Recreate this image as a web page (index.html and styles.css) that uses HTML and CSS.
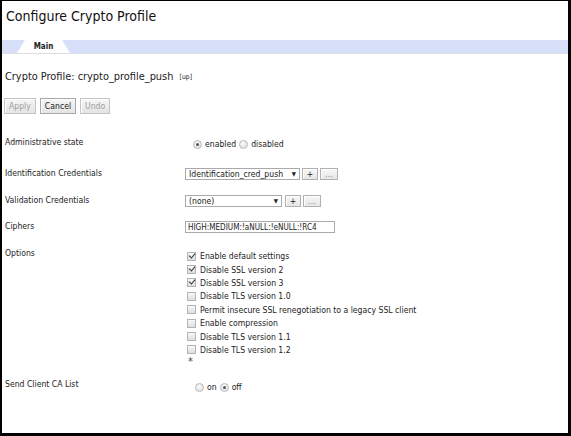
FILE: index.html
```html
<!DOCTYPE html>
<html>
<head>
<meta charset="utf-8">
<link rel="stylesheet" href="styles.css">
</head>
<body>
<div class="frame">
  <h1 class="title">Configure Crypto Profile</h1>
  <div class="tabbar">
    <div class="tab">Main</div>
  </div>
  <div class="profile">Crypto Profile: crypto_profile_push <span class="state">[up]</span></div>
  <div class="actions">
    <button class="btn disabled">Apply</button>
    <button class="btn">Cancel</button>
    <button class="btn disabled">Undo</button>
  </div>

  <div class="row row-admin">
    <div class="label">Administrative state</div>
    <div class="control radios">
      <span class="radio on"></span><span class="rtext">enabled</span>
      <span class="radio"></span><span class="rtext">disabled</span>
    </div>
  </div>

  <div class="row row-ident">
    <div class="label">Identification Credentials</div>
    <div class="control inline">
      <div class="select sel-ident"><span>Identification_cred_push</span><span class="arrow">▼</span></div>
      <span class="mini plus">+</span><span class="mini dim">...</span>
    </div>
  </div>

  <div class="row row-valid">
    <div class="label">Validation Credentials</div>
    <div class="control inline">
      <div class="select sel-valid"><span>(none)</span><span class="arrow">▼</span></div>
      <span class="mini plus">+</span><span class="mini dim">...</span>
    </div>
  </div>

  <div class="row row-ciphers">
    <div class="label">Ciphers</div>
    <div class="control">
      <div class="textbox">HIGH:MEDIUM:!aNULL:!eNULL:!RC4</div>
    </div>
  </div>

  <div class="row row-options">
    <div class="label">Options</div>
    <div class="control checks">
      <div class="check"><span class="box on"></span>Enable default settings</div>
      <div class="check"><span class="box on"></span>Disable SSL version 2</div>
      <div class="check"><span class="box on"></span>Disable SSL version 3</div>
      <div class="check"><span class="box"></span>Disable TLS version 1.0</div>
      <div class="check"><span class="box"></span>Permit insecure SSL renegotiation to a legacy SSL client</div>
      <div class="check"><span class="box"></span>Enable compression</div>
      <div class="check"><span class="box"></span>Disable TLS version 1.1</div>
      <div class="check"><span class="box"></span>Disable TLS version 1.2</div>
      <div class="star">*</div>
    </div>
  </div>

  <div class="row row-send">
    <div class="label">Send Client CA List</div>
    <div class="control radios radios-send">
      <span class="radio"></span><span class="rtext">on</span>
      <span class="radio on"></span><span class="rtext">off</span>
    </div>
  </div>
</div>
</body>
</html>
```
FILE: styles.css
```css
html, body {
  margin: 0;
  padding: 0;
  background: #fff;
}
.frame {
  width: 571px;
  height: 436px;
  box-sizing: border-box;
  border-style: solid;
  border-color: #000;
  border-width: 1px 3px 3px 2px;
  font-family: "DejaVu Sans Condensed", "DejaVu Sans", sans-serif;
  font-stretch: condensed;
  color: #222;
  overflow: hidden;
}
.title {
  margin: 0;
  padding: 6px 0 0 4px;
  height: 33px;
  box-sizing: border-box;
  font-size: 14px;
  font-weight: normal;
  line-height: 18px;
  color: #111;
}
.tabbar {
  height: 13px;
  background: #d8dff8;
  border-bottom: 1px solid #dcdce4;
  margin-top: 6px;
  padding-left: 15px;
  display: flex;
}
.tab {
  width: 53px;
  height: 13px;
  background: #fff;
  clip-path: polygon(15% 0, 85% 0, 100% 100%, 0 100%);
  font-size: 8px;
  font-weight: bold;
  line-height: 13px;
  text-align: center;
  color: #222;
}
.profile {
  margin-top: 16px;
  padding-left: 3px;
  font-size: 10.9px;
  line-height: 14px;
  color: #222;
}
.state {
  font-size: 6.8px;
  margin-left: 3px;
  vertical-align: 1px;
}
.actions {
  margin-top: 14px;
  padding-left: 2px;
  display: flex;
  gap: 4px;
}
.btn {
  height: 16px;
  padding: 0 4px;
  font-family: inherit;
  font-stretch: condensed;
  font-size: 8.6px;
  line-height: 14px;
  color: #222;
  background: linear-gradient(#f6f6f6, #e4e4e4);
  border: 1px solid #a8a8a8;
  border-radius: 0;
  box-shadow: inset 1px 1px 0 #fff;
}
.btn.disabled {
  color: #a0a0a0;
  border-color: #c4c4c4;
}
.row {
  display: flex;
  align-items: flex-start;
  font-size: 8.6px;
  line-height: 10px;
  flex: none;
}
.label {
  width: 180px;
  padding-left: 3px;
  flex: none;
}
.row-admin { margin-top: 23px; height: 31px; }
.row-ident { height: 27px; }
.row-valid { height: 26px; }
.row-ciphers { height: 27px; }
.row-options { height: 131px; }
.row-send { height: 20px; }

.radios {
  display: flex;
  align-items: center;
  padding-left: 8px;
  padding-top: 2px;
}
.radios-send {
  padding-left: 10px;
  padding-top: 3px;
}
.radio {
  width: 7px;
  height: 7px;
  border-radius: 50%;
  border: 1px solid #b8b8b8;
  background: radial-gradient(circle at 40% 35%, #fafafa, #dcdcdc);
  box-sizing: content-box;
  position: relative;
  margin-right: 3px;
  flex: none;
}
.radio.on::after {
  content: "";
  position: absolute;
  left: 2px;
  top: 2px;
  width: 3px;
  height: 3px;
  border-radius: 50%;
  background: #555;
}
.rtext { margin-right: 3px; }

.inline {
  display: flex;
  align-items: center;
}
.select {
  height: 10px;
  border: 1px solid #aaa;
  background: #fff;
  display: flex;
  justify-content: space-between;
  align-items: center;
  padding: 0 3px;
  line-height: 10px;
  margin-right: 2px;
  box-sizing: content-box;
}
.sel-ident { width: 107px; }
.sel-valid { width: 89px; margin-right: 3px; }
.arrow {
  font-size: 6px;
  color: #222;
}
.mini {
  height: 12px;
  box-sizing: border-box;
  border: 1px solid #b0b0b0;
  background: linear-gradient(#f7f7f7, #e6e6e6);
  text-align: center;
  line-height: 10px;
  margin-right: 2px;
  box-shadow: inset 1px 1px 0 #fff;
}
.mini.plus { width: 16px; }
.mini.dim {
  width: 18px;
  color: #888;
}
.textbox {
  width: 144px;
  height: 10px;
  border: 1px solid #aaa;
  padding: 0 2px;
  font-size: 8.1px;
  line-height: 10px;
  white-space: nowrap;
  overflow: hidden;
  box-sizing: content-box;
}

.checks {
  padding-left: 2px;
  padding-top: 1.5px;
}
.check {
  display: flex;
  align-items: center;
  height: 13.4px;
}
.box {
  width: 7px;
  height: 7px;
  border: 1px solid #b4b4b4;
  background: linear-gradient(#f8f8f8, #dedede);
  margin-right: 4px;
  position: relative;
  flex: none;
}
.box.on::after {
  content: "";
  position: absolute;
  left: 1px;
  top: 0px;
  width: 5px;
  height: 3px;
  border-left: 1.5px solid #333;
  border-bottom: 1.5px solid #333;
  transform: rotate(-50deg);
}
.star {
  font-size: 11px;
  line-height: 10px;
  height: 10px;
  color: #444;
  padding-left: 1px;
}
```
